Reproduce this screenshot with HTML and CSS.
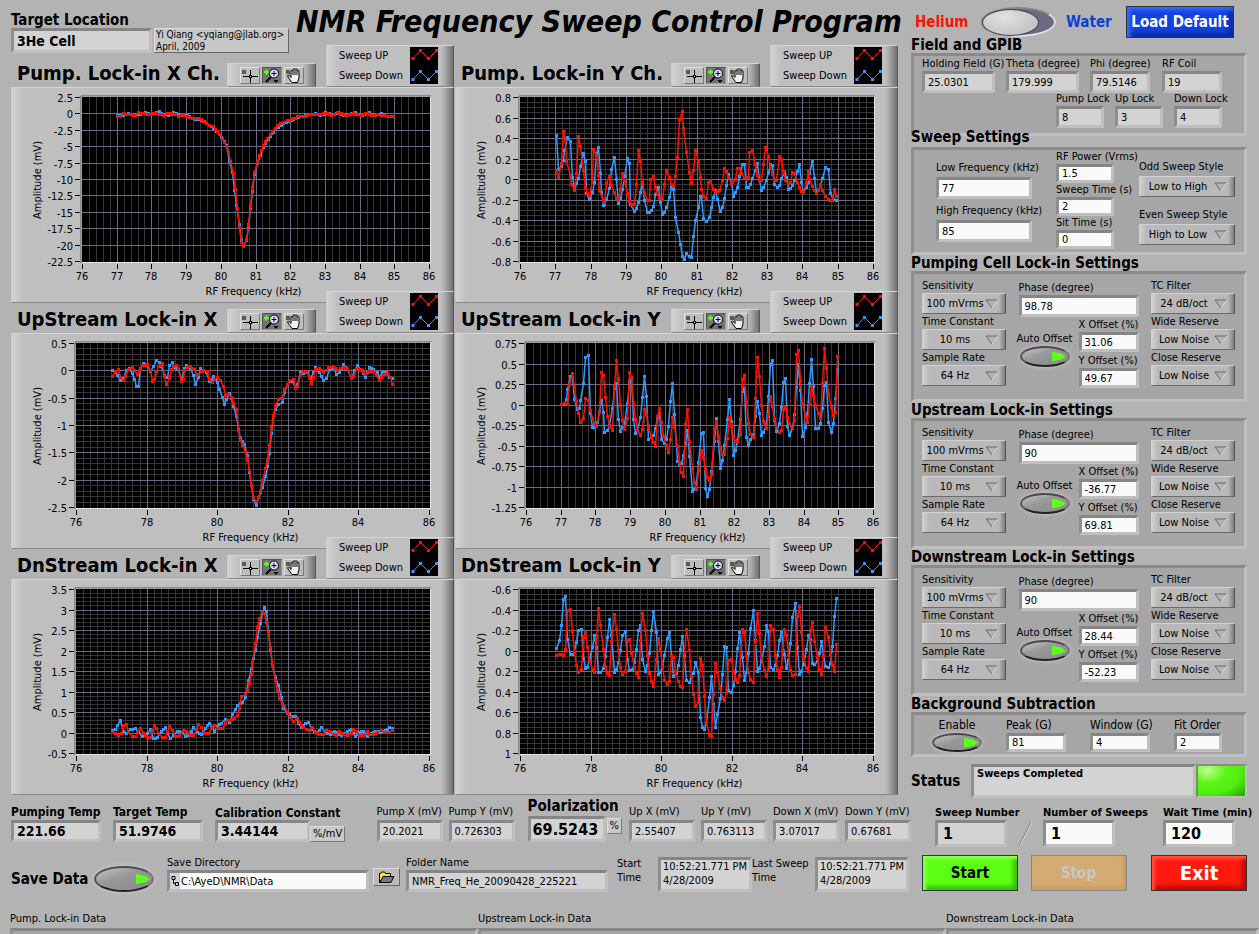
FILE: index.html
```html
<!DOCTYPE html>
<html lang="en">
<head>
  <meta charset="UTF-8">
  <title>NMR Frequency Sweep Control Program</title>
  <link rel="stylesheet" href="styles.css">
</head>
<body>
  <!-- Shared icons -->
  <svg class="sprite" aria-hidden="true">
    <symbol id="i-cursor" viewBox="0 0 20 17">
      <rect x="2" y="3" width="4" height="4" fill="#4c6644"/>
      <path d="M3 9.500h6M12 9.500h6M10.500 3v5M10.500 11v5" stroke="#000" fill="none"/>
      <rect x="9.500" y="8.500" width="2" height="2" fill="#eee" stroke="#000"/>
    </symbol>
    <symbol id="i-zoom" viewBox="0 0 20 17">
      <path d="M4.500 2.500v5M2 5h5" stroke="#5cff1a" stroke-width="2"/>
      <path d="M9 10L4 15" stroke="#000" stroke-width="2"/>
      <circle cx="12" cy="6.500" r="4.500" fill="#dcdcf4" stroke="#000"/>
      <path d="M12 4v5M9.500 6.500h5" stroke="#00006a"/>
      <path d="M11.500 13h5l-2.500 3z" fill="#000"/>
    </symbol>
    <symbol id="i-hand" viewBox="0 0 20 17">
      <rect x="2" y="3" width="4" height="4" fill="#4c6644"/>
      <path d="M8 15.500L4 10q-1-2 .5-2L7 10.500V4q1-1.500 2 0V2.500q1-1.500 2 0V2.500q1-1.500 2 0V4q1.500-1.500 2 0v7l-1.500 4.500z" fill="#f2f2f2" stroke="#000"/>
      <path d="M9 4v4M11 3v5M13 4v4" stroke="#000"/>
    </symbol>
    <symbol id="i-drop" viewBox="0 0 14 10">
      <path d="M1 1h12L7 9z" fill="#b4b4b4" stroke="#666"/>
      <path d="M13 1L7 9" stroke="#f0f0f0"/>
    </symbol>
    <symbol id="i-folder" viewBox="0 0 18 14">
      <path d="M1.500 12.500v-9h1l1-1.500h3l1 1.500h5v3h-6z" fill="#f4e04a" stroke="#000"/>
      <path d="M2 12.500l3-6h11l-3 6z" fill="#777" stroke="#000"/>
    </symbol>
    <symbol id="i-path" viewBox="0 0 8 12">
      <path d="M1 1.500h3v3H1zM4.500 7.500h3v3h-3zM2.500 4.500v4h2" fill="none" stroke="#000"/>
    </symbol>
    <symbol id="i-legend" viewBox="0 0 28 37">
      <rect width="28" height="37" fill="#000"/>
      <path d="M3 11.500l7.500-8 8 8 8-8" stroke="#f10" fill="none"/>
      <path d="M1.500 10h3v3h-3zM9 2h3v3H9zM17 10h3v3h-3zM25 2h3v3h-3z" fill="#f10"/>
      <path d="M3 32.500l7.500-8 8 8 8-8" stroke="#39f" fill="none"/>
      <path d="M1.500 31h3v3h-3zM9 23h3v3H9zM17 31h3v3h-3zM25 23h3v3h-3z" fill="#39f"/>
    </symbol>
  </svg>

  <div class="layout">
    <main class="main">
      <header class="header">
        <div class="field target">
          <label for="target">Target Location</label>
          <input id="target" class="read" value="3He Cell" readonly>
        </div>
        <div class="credit">Yi Qiang &lt;yqiang@jlab.org&gt;<br>April, 2009</div>
        <h1>NMR Frequency Sweep Control Program</h1>
      </header>

      <div class="charts" id="charts"></div>

      <div class="readouts">
        <div class="field temp"><label for="ptemp">Pumping Temp</label><input id="ptemp" class="read" value="221.66" readonly></div>
        <div class="field temp"><label for="ttemp">Target Temp</label><input id="ttemp" class="read" value="51.9746" readonly></div>
        <div class="field temp calib"><label for="calib">Calibration Constant</label><input id="calib" class="read" value="3.44144" readonly></div>
        <span class="unit">%/mV</span>
        <div class="spacer"></div>
        <div class="field mv"><label for="px">Pump X (mV)</label><input id="px" class="read" value="20.2021" readonly></div>
        <div class="field mv"><label for="py">Pump Y (mV)</label><input id="py" class="read" value="0.726303" readonly></div>
        <div class="field polar"><label for="pol">Polarization</label><input id="pol" class="read" value="69.5243" readonly></div>
        <span class="unit percent">%</span>
        <div class="field mv"><label for="ux">Up X (mV)</label><input id="ux" class="read" value="2.55407" readonly></div>
        <div class="field mv"><label for="uy">Up Y (mV)</label><input id="uy" class="read" value="0.763113" readonly></div>
        <div class="field mv"><label for="dx">Down X (mV)</label><input id="dx" class="read" value="3.07017" readonly></div>
        <div class="field mv"><label for="dy">Down Y (mV)</label><input id="dy" class="read" value="0.67681" readonly></div>
      </div>

      <div class="saving">
        <label class="save-label" for="save">Save Data</label>
        <input type="checkbox" id="save" class="oval large" checked>
        <div class="field dir">
          <label for="dir">Save Directory</label>
          <div class="path"><svg width="8" height="12"><use href="#i-path"/></svg><input id="dir" value="C:\AyeD\NMR\Data"></div>
        </div>
        <button class="browse" aria-label="Browse"><svg width="18" height="14"><use href="#i-folder"/></svg></button>
        <div class="field folder"><label for="folder">Folder Name</label><input id="folder" class="read" value="NMR_Freq_He_20090428_225221" readonly></div>
        <label class="when" for="start-time">Start<br>Time</label>
        <output class="stamp" id="start-time">10:52:21.771 PM<br>4/28/2009</output>
        <label class="when last" for="last-time">Last Sweep<br>Time</label>
        <output class="stamp" id="last-time">10:52:21.771 PM<br>4/28/2009</output>
      </div>
    </main>

    <aside class="side">
      <div class="mode">
        <span class="helium">Helium</span>
        <input type="checkbox" class="slider" aria-label="Helium or Water">
        <span class="water">Water</span>
        <button class="btn blue">Load Default</button>
      </div>

      <h2>Field and GPIB</h2>
      <section class="panel gpib">
        <div class="row">
          <div class="field w73"><label for="hf">Holding Field (G)</label><input id="hf" class="read" value="25.0301" readonly></div>
          <div class="field w73"><label for="theta">Theta (degree)</label><input id="theta" class="read" value="179.999" readonly></div>
          <div class="field w60"><label for="phi">Phi (degree)</label><input id="phi" class="read" value="79.5146" readonly></div>
          <div class="field w60"><label for="coil">RF Coil</label><input id="coil" class="read" value="19" readonly></div>
        </div>
        <div class="row locks">
          <div class="field w48"><label for="plock">Pump Lock</label><input id="plock" class="read" value="8" readonly></div>
          <div class="field w48"><label for="ulock">Up Lock</label><input id="ulock" class="read" value="3" readonly></div>
          <div class="field w48"><label for="dlock">Down Lock</label><input id="dlock" class="read" value="4" readonly></div>
        </div>
      </section>

      <h2>Sweep Settings</h2>
      <section class="panel sweep">
        <div class="col freq">
          <div class="field"><label for="low">Low Frequency (kHz)</label><input id="low" value="77"></div>
          <div class="field"><label for="high">High Frequency (kHz)</label><input id="high" value="85"></div>
        </div>
        <div class="col power">
          <div class="field"><label for="rf">RF Power (Vrms)</label><input id="rf" value="1.5"></div>
          <div class="field"><label for="st">Sweep Time (s)</label><input id="st" value="2"></div>
          <div class="field"><label for="sit">Sit Time (s)</label><input id="sit" value="0"></div>
        </div>
        <div class="col style">
          <div class="field"><label for="odd">Odd Sweep Style</label><div class="ring"><select id="odd"><option>Low to High</option></select><svg><use href="#i-drop"/></svg></div></div>
          <div class="field"><label for="even">Even Sweep Style</label><div class="ring"><select id="even"><option>High to Low</option></select><svg><use href="#i-drop"/></svg></div></div>
        </div>
      </section>

      <div id="lockins"></div>

      <h2>Background Subtraction</h2>
      <section class="panel background">
        <div class="field enable"><label for="enable">Enable</label><input type="checkbox" id="enable" class="oval" checked></div>
        <div class="field w60"><label for="peak">Peak (G)</label><input id="peak" value="81"></div>
        <div class="field w60"><label for="window">Window (G)</label><input id="window" value="4"></div>
        <div class="field w48"><label for="order">Fit Order</label><input id="order" value="2"></div>
      </section>

      <div class="status">
        <label for="status">Status</label>
        <output id="status">Sweeps Completed</output>
        <span class="led"></span>
      </div>

      <div class="counts">
        <div class="field"><label for="num">Sweep Number</label><input id="num" class="read" value="1" readonly></div>
        <svg class="slash" width="14" height="26"><path d="M1 25L13 1" stroke="#777"/><path d="M2 25L14 1" stroke="#ddd"/></svg>
        <div class="field"><label for="total">Number of Sweeps</label><input id="total" value="1"></div>
        <div class="field wait"><label for="wait">Wait Time (min)</label><input id="wait" value="120"></div>
      </div>

      <div class="actions">
        <button class="btn green">Start</button>
        <button class="btn tan" disabled>Stop</button>
        <button class="btn red">Exit</button>
      </div>
    </aside>
  </div>

  <div class="data">
    <section><h3>Pump. Lock-in Data</h3><div class="pane"></div></section>
    <section><h3>Upstream Lock-in Data</h3><div class="pane"></div></section>
    <section><h3>Downstream Lock-in Data</h3><div class="pane"></div></section>
  </div>

  <script src="script.js"></script>
</body>
</html>
```
FILE: styles.css
```css
* { box-sizing: border-box; }
body {
  display: flex;
  flex-direction: column;
  margin: 0;
  height: 100vh;
  overflow: hidden;
  background: #b3b3b3;
  color: #000;
  font: 11px/14px "DejaVu Sans Condensed", "DejaVu Sans", sans-serif;
}
h1, h2, h3 { margin: 0; white-space: nowrap; }
label { white-space: nowrap; }
input, select, button { font: inherit; color: inherit; border-radius: 0; }
.sprite { position: absolute; width: 0; height: 0; }
.layout {
  display: grid;
  grid-template-columns: minmax(0, 1fr) 336px;
  flex: none;
  padding: 0 12px 0 11px;
}

/* Sunken boxes */
.field { display: flex; flex-direction: column; flex: none; }
.field input:not([type=checkbox]), .path, .stamp, .status output {
  width: 100%;
  height: 22px;
  margin: 0;
  padding: 0 3px;
  border: 3px solid;
  border-color: #858585 #bfbfbf #bfbfbf #8e8e8e;
  background: #fafafa;
  outline: none;
}
.field input.read, .stamp, .status output { background: #d3d3d3; }

/* Header */
.header {
  display: flex;
  align-items: flex-start;
  height: 45px;
}
.target { width: 141px; margin: 12px 2px 0 0; font-weight: bold; font-size: 15px; line-height: 16px; }
.field.target input { height: 25px; font-size: 14px; }
.credit {
  width: 135px;
  height: 25px;
  margin: 28px 7px 0 0;
  padding: 0 1px;
  border: 1px solid;
  border-color: #ddd #666 #666 #ddd;
  background: #c8c8c8;
  font-size: 10px;
  line-height: 12px;
  white-space: nowrap;
}
h1 { font-size: 30px; font-style: italic; line-height: 44px; }

/* Charts */
.charts {
  display: grid;
  grid-template-columns: 1fr 1fr;
  column-gap: 1px;
  padding: 0 13px 12px 0;
}
.card { margin-bottom: -12px; min-width: 0; }
.card-head { display: flex; align-items: flex-end; height: 42px; }
.card-head h2 { flex: 1; padding-left: 6px; font-size: 20px; line-height: 28px; }
.raised {
  border: 1px solid;
  border-color: #d6d6d6 #555 #888 #ccc;
  background: linear-gradient(to right, #d2d2d2, #bfbfbf 11px, #bfbfbf calc(100% - 12px), #aaa calc(100% - 8px), #707070);
}
.toolbar { display: flex; width: 89px; height: 24px; margin-right: 10px; padding: 3px 12px; gap: 2px; }
.toolbar button { width: 20px; height: 17px; padding: 0; border: 1px solid; border-color: #e0e0e0 #777 #777 #e0e0e0; background: #bdbdbd; }
.toolbar button.on { background: #747474; border-color: #555 #999 #999 #555; }
.toolbar svg { display: block; width: 20px; height: 17px; margin: -1px; }
.legend {
  position: relative;
  display: flex;
  justify-content: space-between;
  width: 128px;
  height: 42px;
  padding: 0 15px 0 12px;
  line-height: 20px;
}
.legend svg { width: 28px; height: 37px; margin-top: 1px; }
.plot { display: block; width: 100%; height: auto; }
.plot text { font-size: 11px; }

/* Readouts under the charts */
.readouts { display: flex; align-items: flex-end; margin-top: 1px; line-height: 16px; }
.temp { width: 90px; margin-right: 12px; font-weight: bold; font-size: 12px; }
.field.temp input { font-size: 14px; }
.calib { width: 95px; margin-right: 0; }
.calib label { line-height: 14px; }
.mv { width: 66px; margin-right: 6px; }
.mv:last-child { margin-right: 0; }
.unit {
  padding: 0 2px;
  border: 1px solid;
  border-color: #ddd #777 #777 #ddd;
  background: #c8c8c8;
  line-height: 14px;
}
.percent { margin: 0 7px 8px 1px; }
.spacer { flex: 1; }
.polar { width: 78px; margin-left: 7px; font-weight: bold; font-size: 15px; line-height: 20px; }
.field.polar input { height: 26px; padding: 0 2px; font-size: 16px; }
.saving { display: flex; align-items: flex-end; margin-top: 14px; }
.save-label { width: 83px; font-weight: bold; font-size: 15px; line-height: 26px; }
.dir { width: 202px; margin-left: 13px; }
.path { display: flex; align-items: center; padding: 0; background: #d3d3d3; }
.path svg { margin: 0 1px; flex: none; }
.field .path input { height: 100%; padding: 0 1px; border: 0; }
.browse { width: 27px; height: 18px; margin: 0 6px 6px 4px; padding: 0; border: 1px solid; border-color: #ddd #666 #666 #ddd; background: #bbb; }
.browse svg { display: block; margin: auto; }
.folder { width: 202px; margin-right: 9px; }
.when { width: 41px; height: 35px; }
.when.last { width: 63px; }
.stamp { width: 94px; height: 35px; padding: 0 2px; white-space: nowrap; }

/* Sidebar */
.side { display: flex; flex-direction: column; }
.side h2 { font-size: 15px; line-height: 16px; }
.mode { display: flex; align-items: center; height: 37px; padding: 7px 0 0 4px; font-size: 15px; font-weight: bold; }
.helium { width: 64px; color: #f10; }
.water { width: 60px; color: #0a40dc; }
.slider {
  appearance: none;
  flex: none;
  position: relative;
  width: 76px;
  height: 30px;
  margin: 0 10px 0 1px;
  border: 2px solid;
  border-color: #888 #ddd #e6e6e6 #999;
  border-radius: 50%;
  background: #6b6b84;
}
.slider::after {
  content: "";
  position: absolute;
  left: 0;
  top: 0;
  width: 55px;
  height: 25px;
  border-radius: 50%;
  border: 1px solid #444;
  background: radial-gradient(ellipse at 40% 30%, #e2e2e2, #b8b8b8);
}
.panel {
  border: 3px solid;
  border-color: #8a8a8a #bfbfbf #bfbfbf #8e8e8e;
  background: #a6a6a6;
}
.row { display: flex; }
.w73 { width: 73px; margin-right: 11px; }
.w60 { width: 60px; margin-right: 12px; }
.w48 { width: 48px; margin-right: 11px; }
.gpib { height: 83px; margin-bottom: -7px; padding: 1px 8px; }
.gpib .locks { margin-left: 134px; margin-top: -1px; }
.sweep { display: flex; height: 108px; margin-top: 2px; padding-left: 22px; }
.col { flex: none; display: flex; flex-direction: column; }
.freq { width: 96px; margin-right: 24px; padding-top: 11px; gap: 5px; }
.power { width: 58px; margin-right: 25px; }
.power .field { height: 33px; }
.style { width: 96px; padding-top: 10px; gap: 11px; }
.freq label, .style label { margin-bottom: 2px; }
.ring { position: relative; }
.ring select {
  appearance: none;
  display: block;
  width: 100%;
  height: 21px;
  padding: 0 20px 0 2px;
  border: 1px solid;
  border-color: #d2d2d2 #555 #6a6a6a #d0d0d0;
  background: linear-gradient(to right, #d0d0d0, #b9b9b9 6px, #b9b9b9 calc(100% - 6px), #7d7d7d);
  text-align: center;
  text-align-last: center;
  outline: none;
}
.ring svg { position: absolute; right: 7px; top: 6px; width: 14px; height: 10px; pointer-events: none; }
.lockin {
  display: flex;
  justify-content: space-between;
  height: 131px;
  padding: 5px 9px 0 8px;
}
.rings { width: 84px; gap: 1px; }
.middle { width: 120px; padding-top: 2px; gap: 1px; }
.middle .row { justify-content: flex-end; }
.auto { width: 60px; margin-top: 14px; margin-right: 4px; align-items: center; }
.offsets { width: 60px; gap: 2px; }
.offsets .field input { height: 20px; }
.oval {
  appearance: none;
  position: relative;
  width: 50px;
  height: 21px;
  margin: 0;
  border: 2px solid;
  border-color: #4a4a4a #777 #222 #555;
  border-radius: 50%;
  background: linear-gradient(160deg, #c8c8c8, #999 40%, #8a8a8a);
  box-shadow: 0 0 4px #d0d0d0;
}
.oval::after {
  content: "";
  position: absolute;
  right: 2px;
  top: 50%;
  width: 14px;
  height: 10px;
  margin-top: -5px;
  background: #5cff1a;
  clip-path: polygon(0 0, 70% 22%, 100% 50%, 70% 80%, 0 100%);
}
.oval:not(:checked)::after { background: #3b6a28; }
.oval.large { width: 60px; height: 26px; }
.background { display: flex; height: 45px; padding: 2px 8px; font-size: 12px; line-height: 16px; }
.background .field input:not([type=checkbox]) { font-size: 11px; }
.background .w60 { margin-right: 24px; }
.enable { width: 70px; margin-right: 14px; align-items: center; }
.status { display: flex; align-items: center; margin-top: 7px; }
.status label { width: 60px; font-weight: bold; font-size: 15px; }
.status output { flex: 1; height: 34px; font-weight: bold; }
.led {
  width: 51px;
  height: 34px;
  border: 2px solid;
  border-color: #8a8a8a #bfbfbf #bfbfbf #6a9a5a;
  background: radial-gradient(ellipse at 20% 15%, #c0ff90, #5cf514 35%, #50ee10 65%, #28a000);
}
.counts { display: flex; align-items: flex-end; margin-top: 8px; padding-left: 24px; font-weight: bold; }
.counts .field { width: 72px; }
.counts .field input { height: 27px; padding: 0 5px; font-size: 16px; }
.slash { margin: 0 11px; flex: none; }
.counts .wait { margin-left: 48px; }
.actions { display: flex; justify-content: space-between; margin-top: 8px; padding-left: 11px; }
.btn {
  height: 36px;
  width: 96px;
  padding: 0;
  border: 1px solid #333;
  font-weight: bold;
  font-size: 15px;
  white-space: nowrap;
}
.blue { width: 108px; height: 32px; background: #1440e0; color: #fff; box-shadow: inset 3px 3px 4px #3c6cff, inset -4px -4px 4px #0a2aa0; }
.green { background: #5cff14; box-shadow: inset 3px 3px 3px #8aff50, inset -4px -4px 4px #38c000; }
.tan { margin-right: 12px; border-color: #888; background: #d4ab72; color: #c8c8c8; box-shadow: inset -3px -3px 4px #c49a62; }
.red { background: #ff1a10; color: #fff; font-size: 20px; box-shadow: inset 3px 3px 3px #ff5040, inset -4px -4px 4px #c00800; }

/* Data panes fill what is left of the window */
.data { display: flex; flex: 1; min-height: 0; margin-top: 18px; padding-left: 10px; }
.data section { flex: none; display: flex; flex-direction: column; width: 468px; }
.data section:last-child { flex: 1; width: auto; }
.data h3 { font-size: 11px; font-weight: normal; line-height: 18px; }
.pane { flex: 1; min-height: 0; border: 3px solid; border-bottom: 0; border-color: #858585 #bfbfbf #bfbfbf #8e8e8e; background: #a6a6a6; }
```
FILE: script.js
```js
// Traces are stored in thirds of a pixel, offset by each chart's origin.
const charts = [
  {
    title: 'Pump. Lock-in X Ch.', left: 71, origin: [33, 261],
    yLabels: ['2.5', '0', '-2.5', '-5', '-7.5', '-10', '-12.5', '-15', '-17.5', '-20', '-22.5'], yMinor: 0, xStep: 1,
    down: '352,344 370,346 385,338 400,344 420,341 435,336 450,343 476,334 490,341 505,344 520,337 540,344 560,344 575,354 594,357 612,364 640,383 664,412 678,436 688,482 697,515 703,570 709,614 716,671 722,719 728,739 737,720 743,680 749,625 756,572 762,522 770,490 788,440 810,407 826,386 850,370 872,359 900,349 930,341 944,340 960,345 976,337 995,343 1015,337 1030,344 1066,337 1085,345 1106,337 1125,345 1144,338 1160,348 1180,347',
    up: '352,349 361,348 370,340 382,341 392,343 404,346 415,337 430,340 446,343 458,339 468,338 478,341 490,344 500,340 512,339 524,343 535,347 550,344 560,348 568,351 577,355 594,353 602,358 610,362 618,369 628,375 638,379 644,386 650,393 658,402 665,414 671,425 678,438 683,457 689,484 698,518 704,568 710,623 716,682 722,727 728,739 737,718 743,671 749,617 755,562 761,515 770,487 776,466 782,449 788,436 794,424 802,413 809,401 815,392 824,383 832,376 839,369 850,365 860,360 872,357 884,353 892,349 904,348 916,347 928,343 940,343 955,343 968,338 980,340 994,344 1010,337 1022,340 1036,344 1048,343 1060,340 1072,341 1082,344 1095,338 1108,341 1120,346 1132,342 1142,345 1160,347 1180,347'
  },
  {
    title: 'Pump. Lock-in Y Ch.', left: 65, origin: [15, 261],
    yLabels: ['0.8', '0.6', '0.4', '0.2', '0', '-0.2', '-0.4', '-0.6', '-0.8'], yMinor: 4, xStep: 1,
    down: '317,406 325,508 332,499 338,481 343,451 350,412 359,424 365,532 371,565 377,548 383,533 391,499 398,460 404,482 409,580 416,598 425,577 431,547 437,460 443,442 449,520 452,575 458,616 463,613 469,597 476,563 482,508 491,472 497,536 503,610 509,595 515,568 523,527 530,475 536,490 541,612 551,634 557,625 563,607 569,575 576,548 583,601 590,637 596,635 602,631 608,617 616,583 623,562 630,605 635,643 641,637 649,622 656,590 662,560 668,566 674,652 683,697 689,733 695,769 701,778 707,758 716,769 722,772 728,709 734,661 743,622 749,587 754,590 760,655 767,664 776,650 782,622 788,592 794,569 801,596 809,634 815,622 821,595 828,556 834,523 842,547 848,587 854,575 861,560 867,529 875,491 881,491 887,562 893,562 899,551 907,533 914,509 920,490 926,539 932,571 940,560 947,541 953,517 959,491 966,496 973,553 980,560 986,556 992,535 1001,515 1007,532 1013,568 1019,565 1025,556 1033,541 1040,514 1046,493 1053,545 1060,577 1067,562 1073,545 1078,518 1085,484 1091,533 1099,575 1105,571 1111,556 1117,535 1124,502 1133,506 1139,580 1150,596 1157,601',
    up: '317,511 325,532 332,488 338,394 344,421 349,483 359,526 364,553 371,571 377,520 383,409 391,439 398,511 404,562 410,580 417,586 425,539 430,446 437,466 443,526 448,571 458,600 463,607 469,549 476,529 483,555 491,577 497,593 503,598 509,568 515,520 523,541 530,579 536,604 542,611 551,611 557,553 563,451 569,484 576,545 583,580 590,600 596,601 601,538 608,529 616,560 622,583 628,594 635,596 642,552 649,511 656,530 663,551 668,557 674,529 682,472 688,357 695,334 700,385 707,455 716,515 722,548 728,509 734,451 743,482 749,530 754,567 760,587 767,593 774,545 781,541 788,567 794,575 801,574 808,571 815,539 821,505 828,512 834,530 842,548 847,547 854,536 861,503 867,503 874,520 881,533 888,536 893,530 898,457 907,451 914,491 920,524 926,539 932,541 940,493 946,442 953,469 959,500 965,521 972,538 979,541 986,469 992,476 999,514 1006,541 1013,551 1019,545 1025,517 1033,520 1040,545 1046,560 1053,573 1059,576 1067,545 1073,514 1078,536 1085,557 1092,569 1099,580 1105,571 1111,553 1117,571 1124,589 1133,596 1138,601 1145,601 1151,566 1157,587'
  },
  {
    title: 'UpStream Lock-in X', left: 65, origin: [33, 129],
    yLabels: ['0.5', '0', '-0.5', '-1', '-1.5', '-2', '-2.5'], yMinor: 5, xStep: 2,
    down: '335,241 345,245 352,255 361,271 370,265 377,241 388,235 395,249 401,268 409,289 415,287 421,235 428,218 440,224 449,243 460,229 467,211 476,216 484,229 493,256 500,260 508,224 515,217 523,230 535,237 544,269 552,233 559,226 569,235 578,256 586,281 594,262 601,233 610,240 618,246 626,274 640,258 652,277 658,296 667,322 673,343 679,328 686,310 692,325 700,349 707,377 713,418 719,443 733,461 740,496 746,545 752,585 758,628 767,646 773,622 785,590 794,559 800,529 806,490 812,430 818,376 826,356 834,343 845,335 851,305 860,283 868,272 876,272 884,290 892,283 899,247 909,250 920,247 930,265 938,245 944,232 958,247 970,269 978,264 986,238 1000,232 1009,253 1018,245 1030,223 1042,238 1053,264 1062,240 1070,226 1080,238 1096,262 1108,230 1120,236 1130,247 1138,262 1146,245 1158,247 1166,262 1175,263',
    up: '335,257 344,243 355,238 361,261 368,271 376,259 385,236 395,232 402,239 410,253 416,241 421,235 428,226 442,223 449,240 455,274 461,268 467,243 475,227 487,220 493,259 499,281 508,260 514,238 520,228 527,224 533,234 542,274 548,268 553,240 560,231 569,229 581,238 588,256 594,253 602,242 610,240 620,243 628,268 635,277 642,268 652,262 660,271 668,289 675,316 685,313 692,322 700,338 707,358 713,419 719,451 725,466 734,482 740,508 746,541 752,586 758,625 767,632 773,622 779,604 785,571 794,533 800,511 806,464 812,412 818,374 826,346 833,328 845,320 851,298 860,281 868,269 878,268 884,295 892,289 899,253 908,244 918,244 926,262 932,280 938,262 944,238 958,235 970,247 984,232 998,229 1010,240 1020,235 1030,230 1042,235 1052,265 1060,258 1068,238 1082,237 1096,253 1105,242 1120,242 1128,256 1136,271 1142,262 1150,252 1162,250 1169,262 1175,283'
  },
  {
    title: 'UpStream Lock-in Y', left: 71, origin: [15, 129],
    yLabels: ['0.75', '0.5', '0.25', '0', '-0.25', '-0.5', '-0.75', '-1', '-1.25'], yMinor: 0, xStep: 1,
    down: '334,343 341,341 347,328 352,296 359,257 367,262 373,326 380,356 386,353 391,331 398,278 406,202 413,196 419,370 425,412 433,412 440,395 446,362 452,331 458,365 463,427 470,421 476,406 485,355 491,293 497,278 503,388 509,424 515,412 523,398 530,340 537,272 542,265 548,388 554,430 560,420 569,382 575,320 581,259 587,319 593,448 602,441 608,436 614,415 620,380 626,370 632,448 641,460 647,446 653,407 659,334 665,278 671,373 680,514 686,523 692,520 698,496 704,458 710,419 718,499 725,604 731,598 737,580 743,517 752,430 758,425 764,595 770,619 776,596 782,542 791,454 797,385 803,454 809,535 815,511 821,466 830,388 836,328 842,394 848,496 854,481 860,451 869,388 875,304 881,293 887,442 893,466 899,448 908,433 914,378 920,334 926,370 932,436 938,427 947,403 953,319 959,223 965,211 971,391 977,424 986,400 992,350 998,277 1004,265 1010,409 1016,436 1025,415 1031,373 1037,292 1043,223 1049,301 1055,439 1064,412 1070,370 1076,280 1082,208 1088,287 1094,415 1103,415 1109,400 1115,353 1121,286 1127,275 1133,397 1142,427 1148,398 1154,325 1160,238',
    up: '334,343 343,340 351,343 358,281 367,250 373,290 379,334 385,370 391,395 398,385 406,325 413,329 419,359 425,383 431,398 437,407 446,367 452,247 458,254 464,322 470,379 476,409 485,421 491,287 497,211 503,268 509,344 515,391 523,418 530,383 536,247 542,262 548,338 554,386 560,421 569,434 575,418 581,358 587,373 593,410 602,440 608,457 614,469 620,379 626,355 632,395 640,437 647,466 653,485 659,448 665,382 671,412 680,469 686,517 692,547 698,559 704,401 710,358 718,454 725,533 731,577 737,596 743,541 752,479 758,502 764,538 770,562 776,569 782,553 791,418 797,394 803,439 809,475 815,491 821,493 830,443 836,382 842,406 848,440 854,454 860,454 869,433 875,268 881,256 887,337 893,400 899,431 908,440 914,325 920,202 926,259 932,346 938,394 947,415 953,371 959,319 965,347 971,386 977,409 986,425 992,421 998,358 1004,352 1010,382 1016,403 1025,413 1031,391 1037,193 1043,181 1049,271 1055,343 1064,379 1070,395 1076,343 1082,289 1088,316 1094,346 1103,368 1109,383 1115,280 1121,175 1127,235 1133,311 1142,352 1148,374 1154,365 1160,199'
  },
  {
    title: 'DnStream Lock-in X', left: 65, origin: [33, 117],
    yLabels: ['3.5', '3', '2.5', '2', '1.5', '1', '0.5', '0', '-0.5'], yMinor: 5, xStep: 2,
    down: '335,571 345,568 352,554 361,541 368,572 378,580 390,568 404,565 415,575 425,588 440,580 450,568 460,595 472,590 482,574 494,562 502,580 509,593 520,585 530,572 545,575 556,588 568,582 580,562 590,575 602,581 614,564 626,548 636,560 642,572 652,558 664,548 675,538 686,545 697,522 704,508 712,494 725,486 734,471 745,420 752,385 758,355 766,328 772,290 779,250 787,218 793,200 799,212 805,272 811,330 817,375 826,412 834,436 842,470 850,505 860,518 872,527 884,528 894,550 902,560 914,550 925,547 935,568 948,575 964,562 974,577 990,581 1003,572 1012,576 1024,586 1040,572 1052,568 1064,588 1076,575 1090,572 1102,588 1114,578 1126,572 1140,576 1155,571 1168,562 1175,565',
    up: '335,575 345,580 355,584 362,578 368,554 377,553 385,575 395,588 404,588 412,575 420,565 428,580 440,590 449,592 455,569 461,554 467,564 475,580 485,590 494,592 502,574 508,558 515,570 525,588 538,586 548,570 558,574 570,584 580,586 588,566 594,553 602,562 612,578 624,580 634,565 641,554 650,565 665,563 674,550 680,540 692,538 702,535 710,524 717,505 724,467 734,461 740,451 746,430 752,403 757,367 766,308 772,262 778,233 785,215 793,220 799,247 805,275 811,322 817,374 826,419 832,451 838,475 845,490 851,499 860,515 870,532 880,544 890,535 896,545 908,562 918,568 928,571 937,560 946,576 958,581 970,581 978,569 988,572 998,583 1008,584 1018,574 1030,581 1042,584 1052,578 1058,568 1068,572 1078,585 1090,584 1100,574 1108,582 1120,582 1132,576 1142,569 1152,575 1165,576 1175,569'
  },
  {
    title: 'DnStream Lock-in Y', left: 65, origin: [15, 117],
    yLabels: ['-0.6', '-0.4', '-0.2', '0', '0.2', '0.4', '0.6', '0.8', '1'], yMinor: 4, xStep: 2,
    down: '317,325 326,301 332,254 338,178 344,169 350,296 359,341 370,341 377,307 383,271 392,268 398,353 404,385 410,380 416,355 425,322 431,286 437,320 443,395 449,395 458,383 464,349 470,290 476,236 482,286 491,395 497,388 503,367 509,331 515,286 524,274 530,358 536,391 545,388 551,365 557,328 563,271 569,256 575,358 584,394 590,376 596,338 602,271 608,214 617,275 623,403 630,397 637,376 643,346 650,295 656,277 662,346 668,409 677,400 683,376 689,328 695,289 701,349 707,421 716,425 722,412 728,400 734,367 743,397 749,532 755,562 761,566 767,545 776,472 782,409 788,493 794,562 800,523 809,475 815,403 821,319 828,320 834,451 842,457 848,436 854,392 860,325 866,277 875,352 881,421 887,395 893,340 899,265 908,211 914,301 920,394 926,385 932,361 941,319 947,256 953,274 959,382 968,386 974,374 980,344 986,301 992,277 1001,343 1007,385 1013,361 1019,310 1025,232 1034,190 1040,322 1046,403 1052,394 1058,373 1067,328 1073,286 1079,298 1085,370 1091,373 1100,364 1106,340 1112,304 1118,346 1124,377 1133,380 1139,370 1145,319 1151,229 1157,175',
    up: '317,346 326,341 332,343 338,346 344,328 350,209 359,206 365,274 371,335 377,374 383,397 392,388 398,290 404,277 410,320 416,361 425,386 431,397 437,290 443,203 449,254 458,328 464,377 470,398 476,406 482,304 491,223 497,268 503,334 509,380 515,403 524,394 530,299 536,296 542,340 551,380 557,400 563,412 569,301 575,218 584,271 590,346 596,398 602,424 608,439 617,358 623,293 629,328 635,379 641,419 650,433 656,424 662,346 668,350 674,392 683,424 689,437 695,442 701,340 707,268 716,331 722,409 728,463 734,499 743,487 749,353 755,374 761,469 767,547 776,586 782,589 788,463 794,368 800,397 809,445 815,472 821,481 827,457 833,361 842,358 848,394 854,418 860,427 866,404 875,268 881,277 887,349 893,397 899,416 908,425 914,304 920,220 926,280 932,353 941,391 947,409 953,386 959,254 968,268 974,346 980,388 986,412 992,380 1001,268 1007,286 1013,346 1019,391 1025,406 1034,401 1040,229 1046,197 1052,277 1058,349 1067,383 1073,392 1079,271 1085,247 1091,304 1100,352 1106,386 1112,401 1118,346 1124,260 1133,290 1139,343 1145,376 1151,394 1157,313'
  }
];

const TOP = 11, BOTTOM = 175, RIGHT = 418;

function tracePoints(str, [ox, oy]) {
  const raw = str.split(' ').map(p => p.split(',').map(Number));
  const out = [];
  raw.forEach(([x, y], i) => {
    if (i) {
      const [px, py] = raw[i - 1];
      const n = Math.max(1, Math.round((x - px) / 8));
      for (let k = 1; k < n; k++) out.push([px + (x - px) * k / n, py + (y - py) * k / n]);
    }
    out.push([x, y]);
  });
  return out.map(([x, y]) => [Math.round((x - ox) / 3), Math.round((y - oy) / 3)]);
}

function drawTrace(str, origin, color) {
  const pts = tracePoints(str, origin);
  const line = pts.map(([x, y]) => `${x + 0.5},${y + 0.5}`).join(' ');
  const dots = pts.map(([x, y]) => `M${x - 1} ${y - 1}h3v3h-3z`).join('');
  return `<polyline points="${line}" fill="none" stroke="${color}" stroke-width="1.5"/><path d="${dots}" fill="${color}"/>`;
}

function drawPlot(c) {
  const xPos = f => Math.round(c.left + (f - 76) * (RIGHT - c.left) / 10);
  const steps = c.yLabels.length - 1;
  const yPos = i => Math.round(TOP + i * (BOTTOM - TOP) / steps) - 1;
  let minor = '', major = '', ticks = '', text = '';
  for (let k = 1; k < 50; k++) minor += `M${xPos(76 + k / 5) + 0.5} 10v165`;
  if (c.yMinor) {
    for (let k = 1; k < steps * c.yMinor; k++) minor += `M${c.left} ${yPos(k / c.yMinor) + 0.5}H419`;
  }
  for (let f = 76; f <= 86; f += c.xStep) {
    if (f > 76 && f < 86) major += `M${xPos(f) + 0.5} 10v165`;
    ticks += `M${xPos(f) + 0.5} 177v5`;
    text += `<text x="${xPos(f)}" y="193" text-anchor="middle">${f}</text>`;
  }
  c.yLabels.forEach((t, i) => {
    if (i > 0 && i < steps) major += `M${c.left} ${yPos(i) + 0.5}H419`;
    ticks += `M${c.left - 7} ${yPos(i) + 0.5}h5`;
    text += `<text x="${c.left - 9}" y="${yPos(i) + 5}" text-anchor="end">${t}</text>`;
  });
  const mid = (c.left + RIGHT) / 2 - 2;
  return `<svg class="plot raised" viewBox="1 1 441 214">
    <rect x="${c.left - 1}" y="9" width="${421 - c.left}" height="167" fill="#e4e4e4"/>
    <path d="M${c.left - 1} 176V9H420" fill="none" stroke="#555"/>
    <rect x="${c.left}" y="10" width="${419 - c.left}" height="165" fill="#000"/>
    <path d="${minor}" stroke="#363636"/><path d="${major}" stroke="#6b6b84"/><path d="${ticks}" stroke="#000"/>
    ${text}
    <text x="${mid}" y="208" text-anchor="middle">RF Frequency (kHz)</text>
    <text transform="translate(30 93) rotate(-90)" text-anchor="middle">Amplitude (mV)</text>
    ${drawTrace(c.down, c.origin, '#3399ff')}
    ${drawTrace(c.up, c.origin, '#ff1100')}
  </svg>`;
}

document.getElementById('charts').innerHTML = charts.map(c => `
  <section class="card">
    <div class="card-head">
      <h2>${c.title}</h2>
      <div class="toolbar raised">
        <button aria-label="Cursor"><svg><use href="#i-cursor"/></svg></button>
        <button class="on" aria-label="Zoom"><svg><use href="#i-zoom"/></svg></button>
        <button aria-label="Pan"><svg><use href="#i-hand"/></svg></button>
      </div>
      <div class="legend raised"><div>Sweep UP<br>Sweep Down</div><svg><use href="#i-legend"/></svg></div>
    </div>
    ${drawPlot(c)}
  </section>`).join('');

// Lock-in amplifier panels
const lockins = [
  { name: 'Pumping Cell', phase: '98.78', x: '31.06', y: '49.67' },
  { name: 'Upstream', phase: '90', x: '-36.77', y: '69.81' },
  { name: 'Downstream', phase: '90', x: '28.44', y: '-52.23' }
];

function ring(id, label, value) {
  return `<div class="field"><label for="${id}">${label}</label><div class="ring"><select id="${id}"><option>${value}</option></select><svg><use href="#i-drop"/></svg></div></div>`;
}
function field(id, label, value) {
  return `<div class="field"><label for="${id}">${label}</label><input id="${id}" value="${value}"></div>`;
}

document.getElementById('lockins').innerHTML = lockins.map((l, i) => `
  <h2>${l.name} Lock-in Settings</h2>
  <section class="panel lockin">
    <div class="col rings">
      ${ring('sens' + i, 'Sensitivity', '100 mVrms')}
      ${ring('time' + i, 'Time Constant', '10 ms')}
      ${ring('rate' + i, 'Sample Rate', '64 Hz')}
    </div>
    <div class="col middle">
      ${field('phase' + i, 'Phase (degree)', l.phase)}
      <div class="row">
        <div class="field auto"><label for="auto${i}">Auto Offset</label><input type="checkbox" id="auto${i}" class="oval" checked></div>
        <div class="col offsets">
          ${field('xoff' + i, 'X Offset (%)', l.x)}
          ${field('yoff' + i, 'Y Offset (%)', l.y)}
        </div>
      </div>
    </div>
    <div class="col rings">
      ${ring('tc' + i, 'TC Filter', '24 dB/oct')}
      ${ring('wide' + i, 'Wide Reserve', 'Low Noise')}
      ${ring('close' + i, 'Close Reserve', 'Low Noise')}
    </div>
  </section>`).join('');
```
